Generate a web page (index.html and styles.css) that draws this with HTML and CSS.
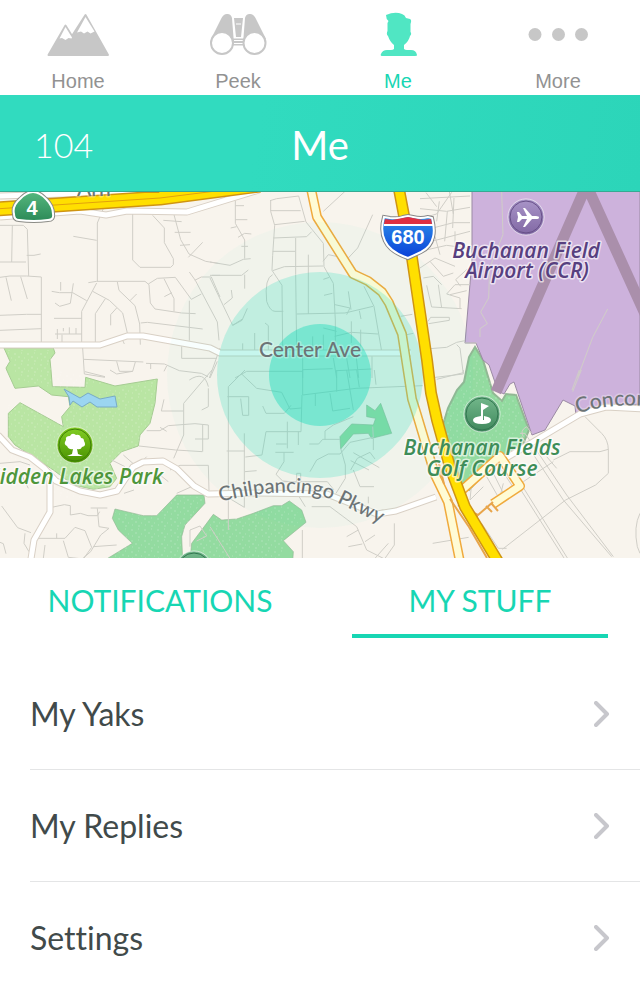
FILE: index.html
```html
<!DOCTYPE html>
<html lang="en">
<head>
<meta charset="utf-8">
<meta name="viewport" content="width=device-width, initial-scale=1">
<title>Me</title>
<link rel="stylesheet" href="styles.css">
</head>
<body>
<nav class="nav" aria-label="Main">
  <a class="nav-item" href="#home">
    <svg class="nav-icon" viewBox="0 0 64 44" aria-hidden="true">
      <path d="M2.500 43 19.500 13.500 26 24 39.500 3 62 43Z" fill="#c7c7c7" stroke="#c7c7c7" stroke-width="2" stroke-linejoin="round"/>
      <path d="m19.500 15-6 11.500 2.500-.500 3.500 2 3-2 3 .500.500-1ZM39.500 5 31 20.500l4-1 3 2 3.500-2 3 2 4-2Z" fill="#fff"/>
    </svg>
    <span>Home</span>
  </a>
  <a class="nav-item" href="#peek">
    <svg class="nav-icon" viewBox="0 0 64 44" aria-hidden="true">
      <g fill="#c7c7c7">
        <path d="M5 27 15.500 6Q18 1.500 21.500 2q3.500 0 4.500 4l2 26H16ZM60 27 49.500 6Q47 1.500 43.500 2 40 2 39 6l-2 26h11Z"/>
        <path d="M28 6h9L35 25h-5ZM26 26.500h13v7H26Z"/>
      </g>
      <path d="M30 12h5M28 28.500h9M28 31.500h9" stroke="#fff"/>
      <g fill="#fff" stroke="#c7c7c7" stroke-width="2"><circle cx="16" cy="31" r="11"/><circle cx="48.500" cy="31" r="11"/></g>
    </svg>
    <span>Peek</span>
  </a>
  <a class="nav-item nav-item-active" href="#me" aria-current="page">
    <svg class="nav-icon" viewBox="0 0 64 44" aria-hidden="true">
      <path fill="#50e6c3" d="M20 3q9-4 16-1 3 1 4 4l4 1q2 1 .500 5v8q1.500 2-.500 4-1 5-6 9v4q1 1 3 1h4q5 0 6 5 .500 1-2 1-17 2-33 0-2 0-1-2 1.500-4 6-4h4q2 0 3-1v-4q-4-3-6-9-2-2-.500-5v-8l1-2Q20 7 20 3Z"/>
    </svg>
    <span>Me</span>
  </a>
  <a class="nav-item" href="#more">
    <svg class="nav-icon" viewBox="0 0 64 44" aria-hidden="true">
      <g fill="#c7c7c7"><circle cx="9" cy="22.500" r="6.500"/><circle cx="32.500" cy="22.500" r="6.500"/><circle cx="55.500" cy="22.500" r="6.500"/></g>
    </svg>
    <span>More</span>
  </a>
</nav>

<header class="titlebar">
  <span class="score">104</span>
  <h1 class="title">Me</h1>
</header>

<main>
<svg class="map" viewBox="0 192 640 366" preserveAspectRatio="xMidYMid slice" role="img" aria-label="Map of your area">
  <defs>
    <pattern id="grass" width="13" height="11" patternUnits="userSpaceOnUse">
      <path d="M1 2h2M8 1h1M5 5h2M11 6h1M2 8h1M8 9h2" stroke="#fff" stroke-opacity=".24"/>
    </pattern>
    <linearGradient id="shield-green" x2="0" y2="1"><stop stop-color="#55b77e"/><stop offset="1" stop-color="#2c8a58"/></linearGradient>
    <linearGradient id="shield-blue" x2="0" y2="1"><stop stop-color="#2e91ea"/><stop offset="1" stop-color="#0a40d8"/></linearGradient>
    <linearGradient id="pin-purple" x2="0" y2="1"><stop stop-color="#a995c8"/><stop offset="1" stop-color="#8168a4"/></linearGradient>
    <linearGradient id="pin-green" x2="0" y2="1"><stop stop-color="#74b98c"/><stop offset="1" stop-color="#3f875c"/></linearGradient>
    <linearGradient id="pin-lime" x2="0" y2="1"><stop stop-color="#83ce25"/><stop offset="1" stop-color="#489000"/></linearGradient>
    <g id="areas">
      <g transform="translate(0 370) scale(.333333)">
        <path class="park" d="M153 0 157 50l98 2 2-30 88 26 127-21-7 73-15 60-30 35-5 33-50 17-35 35 20 45-20 25-50 8-60-13-60-45-115-75-20-25v-70l35-32 130 72-5-30 25-30-5-30-50-5-40-27-70 7L20 0 18-6l12-20L12-66h148l5 15-15 20Z"/>
        <path class="golf" d="m345 417 85 20h40l60-62h82l3 25-60 65-10 35 3 70H315l82-50-42-40-18-35Z"/>
        <path class="golf" d="m570 570 5-50 30-40 35-47 25 17 45-3 50-17 60-23h25l23-14 37 27 13 37-68 55 30 33-2 30Z"/>
      </g>
      <g transform="translate(210 370) scale(.333333)"><path class="golf" d="m470 105 25 17 17-22 33 90-60 15-10-15-45 2-38 45-2-37 35-38 65 3 7-20-27-5Z"/></g>
      <path class="golf" d="m475 347-6 10-5 25-7 8-9 18-6 20 4 22 14 35 9 5 20-22 21-16 13-8 6-14-13-35-10-1-4 7-9-8-10-33Z"/>
    </g>
  </defs>

  <rect class="land" y="190" width="640" height="370"/>
  <use href="#areas"/>
  <g fill="url(#grass)">
    <path d="M8 405 20 401l42 20 12-18 40-14 43-10-2 30-17 38-26 18-10 14 8 14-24 9-27-6-50-35ZM5 350h48l-2 20 60 10-35 12-30-6-28-6Z"/>
    <path d="m115 512 42 4 20-20 27 1-15 25-4 36h-78l22-14ZM192 552l20-34 30-1 40-13 10 2 10 12-18 20v20h-94ZM475 350l17 35 22-2 10 40-30 30-23 27-23-40-5-25 22-30Z"/>
  </g>
  <path class="water" d="m64 389 16 9 8-5 12 6 15-3 2 11H97l-7-5-8 5-9-6-3 4-1-8Z"/>
  <path class="airport" d="M472 190v70l-7 83h11l7 17 6 5 9 26 6 3 6-10 4-2 18 53 13-5 18-30 12 6 1 10 18-8 46-4V190Z"/>
  <path class="runway" d="m496 392 91-208m-1 0 60 132"/>

  <g class="streets">
    <g transform="translate(0 188) scale(.333333)">
      <path d="M0 112h70l12 12 4 140M37 112l-2 110M0 222h78M80 202h22l20-4M0 268l30-4h50l44 3v200M18 268l16 70M62 266l20 67M0 382l80-3h44M0 427l124-5M292 280V105l20-48M220 145l70 12M398 78v138l22 22h92l8-8v-18l-27-48v-44l-35-38M522 80l20 75 25 43 50 22 43 7M490 97l55 4M524 133h48M540 172l30-2M565 208l43-45M265 284l25-4h145l12 10 4 55 14 18 80 12 42 2M290 285l-45 85v94M352 282l5 25 48 46 14 55 2 62M390 338l20-20M278 310l50 27 40 38 14 60M316 332l-30 45v90M350 360l-18 20v32M445 288l27-17 54-3 48 66 30-16M492 272l30 60v38M493 326l23-12M568 252l18 25 66 125 5 55M584 277l20-10h30l26 60M636 262h24M568 338v120M422 405l20-2 166 20M545 475v36h105M155 310l23 4h40l42 24M182 282v26M220 286l-9 60-32 9-14-10M162 391h84M165 438h80M172 423v30M190 430v-10M208 418v20M228 420v18M186 440v26M365 450l8 18M248 480l5 78 62 10M252 514l178 8M350 520l8 30h40l8-28M438 526l55 2 45 20 66 8 20 10M452 528v15M500 534l-8 16M628 570l32-90"/>
    </g>
    <g transform="translate(210 188) scale(.333333)">
      <path d="M76 38v68l28 50v56M76 53h26M76 95h36M62 120l18-4M84 148l20-12 20 2M94 175h20M0 222l60 10 40-18 22-2M0 262h95l20-16M104 260v42M0 270l68 142 28-18M42 350l25-20-3-24M68 412l28-15 16-36M180 38l20-6 66-8 22 78 52 64 2 70 28 50 6 110v110M182 68h90M194 110l90-10M182 38v32l12 42-6 90-2 45 30 45 2 190M190 150l100-4 15-15M188 190h68M257 150v110l3 220M188 248l35-12 117-2M295 200v178M188 260q-25 10-18 80 10 30 25 30h25M260 378l145-3 84-20M340 70l65-60M488 80l-45 100-30 32-58-12-16 20M340 274l18-6M342 322l25-6M415 310l8 55M448 368l5 25M462 295l30 60 23 135M375 350l45 10-10 20M374 445l50-12 80 5M424 400v65M452 425v55M340 420l40 10M0 570l22-50M98 466v20M134 435v54M165 405l10 8v75M308 445v45M340 440v50M278 490v80M370 510l10 60M410 510l10 60M438 500l8 70M486 505v65M572 385l35-6M75 570l35-20h168M278 545l90-3M380 548l105-5M590 440l20-4"/>
    </g>
    <g transform="translate(420 188) scale(.333333)">
      <path d="m0 92 50-14 45-65M0 32l150-8M18 14l32 42M88 10l12 68M0 62l80 8 70-12M58 40l-8 60M102 30l-4 90M0 130l100-26h50M35 160l115-30M0 190l80-18 75 10M45 145l15 55M82 70l-8 90M105 130v55M0 240l45-30 60 25M10 270l30-5 25 25M30 220l40 45 30-10M20 292l15 65 90 5M55 290l10 70M80 318l40 12v30M80 318l25-28h45M122 295l-15-20 35-32M90 320l50-12M24 400l8-12h56v9l-62 10M30 482l50-4 30-15 25-5M110 470l10 10 10 78-100 12M170 465h-36"/>
      <path d="M245 10l4 130-40 100-3 90-24 42 20 35-22 15v25M563 363l-45 85-45 120"/>
    </g>
    <g transform="translate(0 370) scale(.333333)">
      <path d="m255 5 60 15M330 0l20 12 48-8M492 88l-8 35h66M636 0l-85 100v95l-30 70M568 30q45-30 57 20M625 55v55l-20 10M440 182h40l25-15 80-6 40 4v42M480 172l20 12M608 165v80M585 207h40M417 228l110 12 80 5M370 255l40 35 30-30M375 290l-40-20M510 300l30-14h85l2 75M0 280l60-5 30 10M60 305l25 50M150 330l100 42M530 370l45-20M5 408l48 65 40 15M155 412l38-8 18 3v28l30-5 23 7h28l7-12M272 414h50M292 415l5 55 30 5-25 20-30 50-23 20M110 505h85l30-33 30 10 20 50-25 35-45-5-15-50M170 490v15M280 530l70-5M135 525l-5 40M75 490l-3 30 15 25M0 517l10 4 8 30M372 370l30-10M460 330l20-15 25 20M570 530v-50l30-12 20 30-30 15"/>
    </g>
    <g transform="translate(210 370) scale(.333333)">
      <path d="M95 12 140 55l75 12 25 50 35-3M105 0 55 50v430M52 80h64v56H98l-6-50M158 108l10 22h55l20-24M278 0v75M278 75l160-20 200-8M276 75l-3 110H168l-12 70-50 6M232 155v80M198 222h32M265 185v40M196 247h55M222 247v28l-24 38 20 20 55 5M103 190v222l-50-30M50 243h55M105 305l35-3M316 70v38M360 70l8 53 52-8M410 0l20 120M440 0l8 52M493 0l5 44M380 0v65M298 222h28l12-14h52M345 208v-25l25-18 60-25M300 305l20-35 35-18h35l30-35 70-15-2-32M392 235l14 50v40l-28 45M422 300l20-35 38-18 15 20M422 272l55 28M430 300l20 50h42M430 248l78 45M490 205v35M220 335h40v-25h12v25h80l20 25M258 365l28 45M305 410h55l80 60 30 70 50 25M410 500l35-20M415 530l42-8M465 515l30-20M553 460v65l-28 40M535 520l-40 45M277 480v84M475 380v20M515 420q15 0 15 15M0 470l60 95"/>
    </g>
    <g transform="translate(420 370) scale(.333333)">
      <path d="M50 28l80-20V0M484 0l-26 65M478 0l-22 60M495 140l50 50q20 20 20 50v70l-38 35-90 45-190 148M400 270l50-25h90l25-7M300 190h15l125 185 140 185M305 200l125 190 145 170M290 340l142 224M302 340l140 224M310 335l90-60M380 260l30 35M660 430q-20 40-8 100l8 20M155 340l-5 50 40-40M185 460l50 75h25M200 320l40 70M220 310l30 60M245 300l40 60M38 520l108-18M240 380l10-40M310 200q-12-18 10-30l15 20"/>
    </g>
  </g>

  <g class="road-case">
    <path id="r1" d="m0 217 80-6 26 4 21-4 60 1 72-22M0 196l160-5"/>
    <path id="r2" d="M0 345h100l27-9h16l67 12 10 5h191"/>
    <path id="r3" d="m-2 435 14 15 18 7 14 11 12 13 24 10 20 4 17-4 16-24 10-5 20-1 14 8 17 17 14 8 50-1 69 1 50 20 19-3 40-14"/>
    <path id="r4" d="M50 478v34l-16 28-4 25M506 458l74-44 26-7 40 2"/>
  </g>
  <g class="road"><use href="#r1"/><use href="#r2"/><use href="#r3"/><use href="#r4"/></g>

  <g class="local-case">
    <path id="y1" d="m310 184 7 33 36 57 15 7 14 11 7 11 13 31 10 65 5 16 18 60 13 27 12 60"/>
    <path id="y2" d="m462 490 38-34 20 30-27 18"/>
  </g>
  <g class="local"><use href="#y1"/><use href="#y2"/></g>
  <path class="ramp" d="m444 484-5-20m11 35 19 28 18 31m-29-53 20 10 15-13m-16 14v12m9-22 6 6m-1-9 7 8"/>

  <circle cx="320" cy="375" r="153" fill="#2dd9bb" fill-opacity=".035"/>
  <circle cx="320" cy="375" r="103" fill="#2bdcbb" fill-opacity=".24"/>
  <circle cx="320" cy="375" r="51" fill="#16dbb9" fill-opacity=".42"/>

  <g class="highway-case"><path id="h1" class="wide" d="m-5 209 165-11 100-13"/><path id="h2" d="m398 184 14 74 15 102 4 33 6 27 13 47 15 40 35 58"/></g>
  <g class="highway"><path class="wide" d="m-5 209 165-11 100-13"/><use href="#h2"/></g>
  <path d="m-5 209 165-11 80-10" fill="none" stroke="#e2a20c"/>
  <text class="label label-road" x="77" y="196">Arn</text>

  <g class="label label-road">
    <text x="310" y="357" text-anchor="middle">Center Ave</text>
    <path id="pkwy" d="M220 502q64-17 108-4l66 32" fill="none"/>
    <text class="small"><textPath href="#pkwy">Chilpancingo Pkwy</textPath></text>
    <path id="concord" d="M578 414q32-13 92-6" fill="none"/>
    <text><textPath href="#concord">Concor</textPath></text>
  </g>
  <g class="label label-place" text-anchor="middle">
    <g fill="#57407f"><text x="526" y="258">Buchanan Field</text><text x="527" y="278">Airport (CCR)</text></g>
    <g fill="#3e8d58"><text x="482" y="455">Buchanan Fields</text><text x="482" y="476">Golf Course</text></g>
    <text x="163" y="484" fill="#4e963b" text-anchor="end">Hidden Lakes Park</text>
  </g>

  <g stroke="#fff" stroke-opacity=".65">
    <circle cx="526" cy="217" r="18" fill="url(#pin-purple)"/>
    <circle cx="482" cy="414" r="18" fill="url(#pin-green)"/>
    <circle cx="75" cy="445" r="18" fill="url(#pin-lime)"/>
    <circle cx="194" cy="569" r="18" fill="url(#pin-green)"/>
  </g>
  <g fill="none" stroke-width="1">
    <circle cx="526" cy="217" r="16" stroke="#665087"/><circle cx="482" cy="414" r="16" stroke="#327550"/><circle cx="75" cy="445" r="16" stroke="#407f07"/><circle cx="194" cy="569" r="16" stroke="#327550"/>
  </g>
  <g fill="#fff">
    <path d="M517 212h2l3 4h5l-4-8h2l7 8h4q3 0 3 1.500t-3 1.500h-4l-7 8h-2l4-8h-5l-3 3h-2l1-5Z"/>
    <path d="M481 403v17h2v-10l6-4Z"/><path d="M481 416q-8 1-8 4 0 4 9 4t9-4q0-3-7-4v4h-3Z"/>
    <path d="m73 449-1 5-5 2h16l-5-2-1-5q4 1 5-2 5-1 2-6 0-3-3-3-1-4-5-3-4-3-6 1-5 0-4 4-3 4 1 6 2 4 6 3Z"/>
  </g>
  <g transform="translate(0 -2)">
    <path d="M14 216q-2-8 6-15 13-14 26 0 7 7 7 15 1 6-5 6-14 2-29 0-5 0-5-6Z" fill="none" stroke="#8b8b86" stroke-width="4"/>
    <path d="M14 216q-2-8 6-15 13-14 26 0 7 7 7 15 1 6-5 6-14 2-29 0-5 0-5-6Z" fill="url(#shield-green)" stroke="#fff" stroke-width="2"/>
  </g>
  <path d="m384 217 6 1q8 1 13-1l5-1 5 1q8 2 15 0l4 1q3 12 1 19-2 10-12 15l-13 6q-18-6-23-17-5-10-1-24Z" fill="none" stroke="#888" stroke-width="4"/>
  <path d="m384 217 6 1q8 1 13-1l5-1 5 1q8 2 15 0l4 1q3 12 1 19-2 10-12 15l-13 6q-18-6-23-17-5-10-1-24Z" fill="url(#shield-blue)" stroke="#fff" stroke-width="2"/>
  <path d="m385 219 7 1 16-3 15 3 8-1 1 5h-48Z" fill="#df3041"/><path d="M384 225h49" stroke="#fff" stroke-width="2"/>
  <g class="shield-text" text-anchor="middle"><text x="32" y="215">4</text><text x="408" y="244">680</text></g>
</svg>

<nav class="tabs" aria-label="Sections">
  <a class="tab" href="#notifications">NOTIFICATIONS</a>
  <a class="tab tab-active" href="#stuff" aria-current="true">MY STUFF</a>
</nav>

<ul class="list">
  <li><a class="row" href="#yaks">My Yaks<svg class="chevron" viewBox="0 0 16 26" aria-hidden="true"><path d="m2 2 11 11L2 24"/></svg></a></li>
  <li><a class="row" href="#replies">My Replies<svg class="chevron" viewBox="0 0 16 26" aria-hidden="true"><path d="m2 2 11 11L2 24"/></svg></a></li>
  <li><a class="row" href="#settings">Settings<svg class="chevron" viewBox="0 0 16 26" aria-hidden="true"><path d="m2 2 11 11L2 24"/></svg></a></li>
</ul>
</main>
</body>
</html>
```
FILE: styles.css
```css
* { box-sizing: border-box; }
body { margin: 0; background: #fff; font-family: Lato, "Open Sans", sans-serif; font-variant-ligatures: none; color: #414a4a; }
a { color: inherit; text-decoration: none; }

.nav { display: grid; grid-template-columns: repeat(4, 1fr); margin: 0 2px 0 -2px; padding-top: 12px; height: 95px; }
.nav-item { display: flex; flex-direction: column; align-items: center; gap: 13px; font: 20px/24px "Liberation Sans", Arial, sans-serif; color: #929292; }
.nav-item-active { color: #17d6b3; }
.nav-icon { width: 64px; height: 44px; }

.titlebar { display: grid; grid-template-columns: 1fr auto 1fr; align-items: center; height: 97px; padding: 4px 34px 0; background: linear-gradient(100deg, #31dbbf 40%, #2cd5b9); border-bottom: 1px solid #36aa93; color: #fff; }
.score { font-size: 34px; font-weight: 300; line-height: 48px; }
.title { margin: 0; font-size: 40px; font-weight: 400; line-height: 48px; }

.map { display: block; width: 100%; height: auto; }
.land { fill: #f8f4ed; }
.park { fill: #b9e5a3; stroke: #a6cc93; stroke-width: 3; }
.golf { fill: #93dba0; stroke: #92b894; stroke-width: 2; }
.water { fill: #9bd5f1; stroke: #78abc6; }
.airport { fill: #cdb2dc; stroke: #9b8aa4; }
.runway { fill: none; stroke: #aa8fab; stroke-width: 11; }
.streets { fill: none; stroke: #d0cec7; stroke-width: 3; }
.road-case, .road, .local-case, .local, .highway-case, .highway, .ramp { fill: none; stroke-linejoin: round; }
.road-case { stroke: #d9d0c5; stroke-width: 7; }
.road { stroke: #fff; stroke-width: 5; }
.local-case { stroke: #f0aa3d; stroke-width: 10; }
.local { stroke: #fffbd5; stroke-width: 7; }
.ramp { stroke: #e8a54b; stroke-width: 2; }
.highway-case { stroke: #cf9412; stroke-width: 12; }
.highway { stroke: #ffdf00; stroke-width: 9; }
.highway-case .wide { stroke-width: 15; }
.highway .wide { stroke-width: 12; }
.label { font-family: Lato, sans-serif; font-size: 21px; paint-order: stroke; stroke: #fff; stroke-opacity: .65; stroke-width: 3; stroke-linejoin: round; }
.label path { stroke: none; }
.label-road { fill: #6c7476; stroke-opacity: .3; font-weight: 500; }
.label-road .small { font-size: 20px; }
.label-place { font-family: "Open Sans", "Noto Sans", sans-serif; font-size: 21px; font-weight: 600; font-style: italic; }
.shield-text { font: bold 20px "Liberation Sans", Arial, sans-serif; fill: #fff; }

.tabs { display: grid; grid-template-columns: 1fr 1fr; }
.tab { margin: 0 32px; height: 80px; padding-top: 22px; border-bottom: 4px solid transparent; font-size: 30px; line-height: 40px; text-align: center; white-space: nowrap; color: #17d6b3; }
.tab-active { border-color: #17d6b3; }

.list { list-style: none; margin: 20px 0 0; padding: 0 0 0 30px; }
.list li + li { border-top: 1px solid #e4e5e6; }
.row { display: flex; align-items: center; justify-content: space-between; height: 111px; padding-right: 30px; font-size: 32px; font-weight: 400; }
.chevron { width: 16px; height: 26px; fill: none; stroke: #c7c7cc; stroke-width: 4; stroke-linecap: round; stroke-linejoin: round; }
```
